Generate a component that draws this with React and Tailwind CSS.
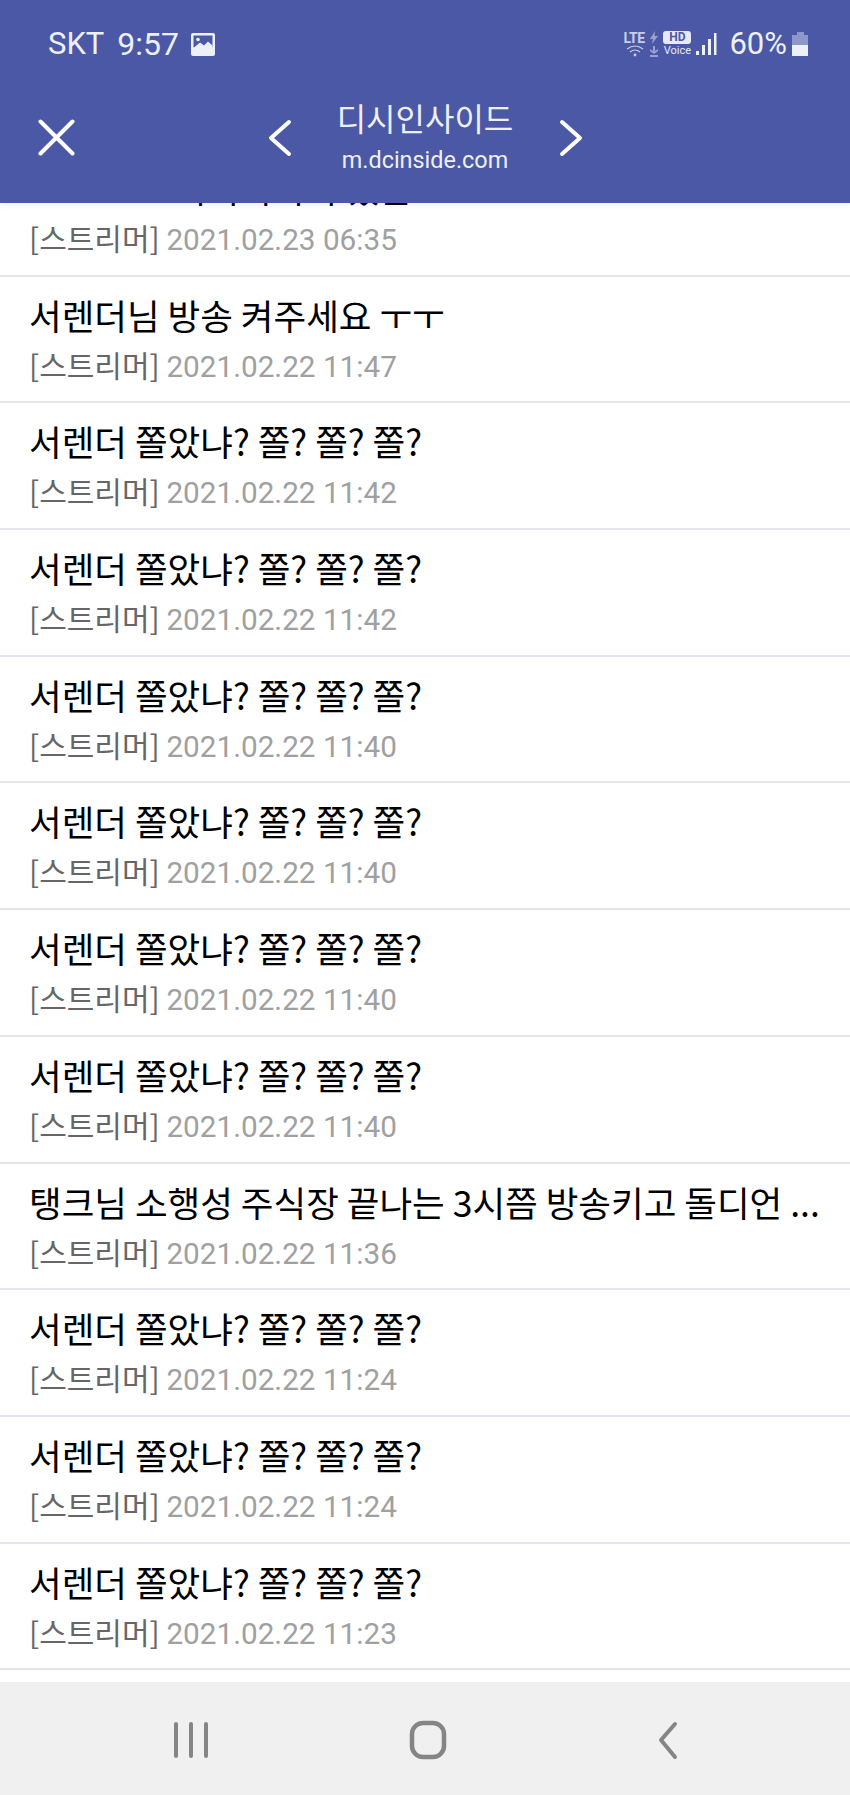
import React from "react";

const rows = [
  { title: "서렌더님 방송 켜주세요 ㅜㅜ", time: "2021.02.22 11:47" },
  { title: "서렌더 쫄았냐? 쫄? 쫄? 쫄?", time: "2021.02.22 11:42" },
  { title: "서렌더 쫄았냐? 쫄? 쫄? 쫄?", time: "2021.02.22 11:42" },
  { title: "서렌더 쫄았냐? 쫄? 쫄? 쫄?", time: "2021.02.22 11:40" },
  { title: "서렌더 쫄았냐? 쫄? 쫄? 쫄?", time: "2021.02.22 11:40" },
  { title: "서렌더 쫄았냐? 쫄? 쫄? 쫄?", time: "2021.02.22 11:40" },
  { title: "서렌더 쫄았냐? 쫄? 쫄? 쫄?", time: "2021.02.22 11:40" },
  { title: "탱크님 소행성 주식장 끝나는 3시쯤 방송키고 돌디언 ...", time: "2021.02.22 11:36" },
  { title: "서렌더 쫄았냐? 쫄? 쫄? 쫄?", time: "2021.02.22 11:24" },
  { title: "서렌더 쫄았냐? 쫄? 쫄? 쫄?", time: "2021.02.22 11:24" },
  { title: "서렌더 쫄았냐? 쫄? 쫄? 쫄?", time: "2021.02.22 11:23" },
];

const Row = ({ title, time }) => (
  <div className="h-[126.7px] pl-[29px] pt-[12px] border-b-2 border-[#e4e4ee] overflow-hidden">
    <div className="text-[35.5px] leading-[52px] text-black whitespace-nowrap">{title}</div>
    <div className="text-[30px] leading-[46px] whitespace-nowrap">
      <span className="text-[#666666]">[스트리머]</span>{" "}
      <span className="text-[#a0a0a0] text-[29.7px] font-['Roboto']">{time}</span>
    </div>
  </div>
);

const StatusBar = () => (
  <div className="flex items-center justify-between h-[88px] pl-[48px] pr-[41px] text-[#eef0f8] font-['Roboto']">
    <div className="flex items-center">
      <span className="text-[31px]">SKT</span>
      <span className="text-[32px] ml-[13px]">9:57</span>
      <svg className="ml-[12px]" width="24" height="23" viewBox="0 0 24 23">
        <rect x="0" y="0" width="24" height="23" rx="2" fill="#eef0f8" />
        <rect x="2.5" y="2.5" width="19" height="12" fill="#4b58a6" />
        <circle cx="7" cy="6.5" r="1.8" fill="#eef0f8" />
        <path d="M2.5 15 L9 9.5 L13 12.5 L17 8.5 L21.5 12.5 V16 H2.5 Z" fill="#eef0f8" />
      </svg>
    </div>
    <div className="flex items-center">
      <div className="relative w-[25px] h-[26px] text-[#c9cee6]">
        <span className="absolute left-0 top-0 text-[14px] leading-[14px] font-bold tracking-[-0.5px]">LTE</span>
        <svg className="absolute left-[3px] top-[14px]" width="18" height="12" viewBox="0 0 18 12" fill="none" stroke="currentColor" strokeWidth="1.2">
          <path d="M1 4 Q9 -2 17 4" />
          <path d="M4 7 Q9 3 14 7" />
          <circle cx="9" cy="10" r="0.8" fill="currentColor" />
        </svg>
      </div>
      <svg className="ml-[1px]" width="10" height="26" viewBox="0 0 10 26" fill="#9aa2cf">
        <path d="M6 0 L1 8 H4 L3 13 L9 5 H5.5 Z" />
        <path d="M4 15 H6 V20 L9 18 V20 L5 23 L1 20 V18 L4 20 Z M1 24 H9 V26 H1 Z" />
      </svg>
      <div className="ml-[4px] w-[28px] flex flex-col items-center">
        <span className="w-[28px] h-[13px] rounded-[3px] bg-[#e6e8f3] text-[#4b58a6] text-[12px] leading-[13px] font-bold text-center">HD</span>
        <span className="text-[11px] leading-[12px] mt-[1px] text-[#e6e8f3]">Voice</span>
      </div>
      <svg className="ml-[5px]" width="22" height="24" viewBox="0 0 22 24" fill="#eef0f8">
        <rect x="0" y="19" width="3" height="4" />
        <rect x="6" y="13" width="3" height="10" />
        <rect x="12" y="7" width="3" height="16" />
        <rect x="18" y="1" width="2.5" height="22" />
      </svg>
      <span className="text-[31px] ml-[11px]">60%</span>
      <svg className="ml-[5px]" width="17" height="25" viewBox="0 0 17 25">
        <rect x="5" y="0" width="7" height="3" fill="#8f97c8" />
        <rect x="0" y="3" width="16" height="10" fill="#8f97c8" />
        <rect x="0" y="13" width="16" height="11" fill="#eef0f8" />
      </svg>
    </div>
  </div>
);

const Toolbar = () => (
  <div className="relative flex items-start justify-center h-[115px]">
    <svg className="absolute left-[38px] top-[31px]" width="37" height="37" viewBox="0 0 37 37" fill="none" stroke="#ffffff" strokeWidth="4" strokeLinecap="round">
      <path d="M2.5 2.5 L34.5 34.5 M34.5 2.5 L2.5 34.5" />
    </svg>
    <svg className="absolute left-[268px] top-[31px]" width="24" height="38" viewBox="0 0 24 38" fill="none" stroke="#ffffff" strokeWidth="4" strokeLinecap="round" strokeLinejoin="round">
      <path d="M21 3 L3 19 L21 35" />
    </svg>
    <div className="flex flex-col items-center text-[#eef0f8]">
      <span className="text-[32px] leading-[46px] mt-[6px]">디시인사이드</span>
      <span className="text-[23.4px] leading-[30px] font-['Roboto'] mt-[5px]">m.dcinside.com</span>
    </div>
    <svg className="absolute left-[559px] top-[31px]" width="24" height="38" viewBox="0 0 24 38" fill="none" stroke="#ffffff" strokeWidth="4" strokeLinecap="round" strokeLinejoin="round">
      <path d="M3 3 L21 19 L3 35" />
    </svg>
  </div>
);

const NavBar = () => (
  <div className="flex items-center h-[113px] bg-[#f0f0f0] relative">
    <svg className="absolute left-[173px] top-[40px]" width="38" height="38" viewBox="0 0 38 38" fill="none" stroke="#858585" strokeWidth="4" strokeLinecap="round">
      <path d="M3 2 V34 M18 2 V34 M33 2 V34" />
    </svg>
    <svg className="absolute left-[409px] top-[38px]" width="40" height="40" viewBox="0 0 40 40" fill="none" stroke="#858585" strokeWidth="4.5">
      <rect x="3" y="3" width="32" height="34" rx="11" />
    </svg>
    <svg className="absolute left-[655px] top-[39px]" width="26" height="40" viewBox="0 0 26 40" fill="none" stroke="#858585" strokeWidth="4" strokeLinecap="round" strokeLinejoin="round">
      <path d="M20 3 L6 19 L20 36" />
    </svg>
  </div>
);

export default function App() {
  return (
    <div className="w-[850px] h-[1795px] flex flex-col bg-white overflow-hidden font-['Noto_Sans_CJK_KR','Noto_Sans',sans-serif]">
      <div className="relative shrink-0 h-[203px] bg-[#4b58a6] z-10 shadow-[0_2px_6px_rgba(60,60,100,0.08)]">
        <StatusBar />
        <Toolbar />
      </div>
      <div className="flex-1 overflow-hidden">
        <div className="-mt-[53px]">
          <Row title="ㅇㅇ ㅡㅡ 아아아아아 있는" time="2021.02.23 06:35" />
          {rows.map((r, i) => (
            <Row key={i} title={r.title} time={r.time} />
          ))}
        </div>
      </div>
      <NavBar />
    </div>
  );
}
